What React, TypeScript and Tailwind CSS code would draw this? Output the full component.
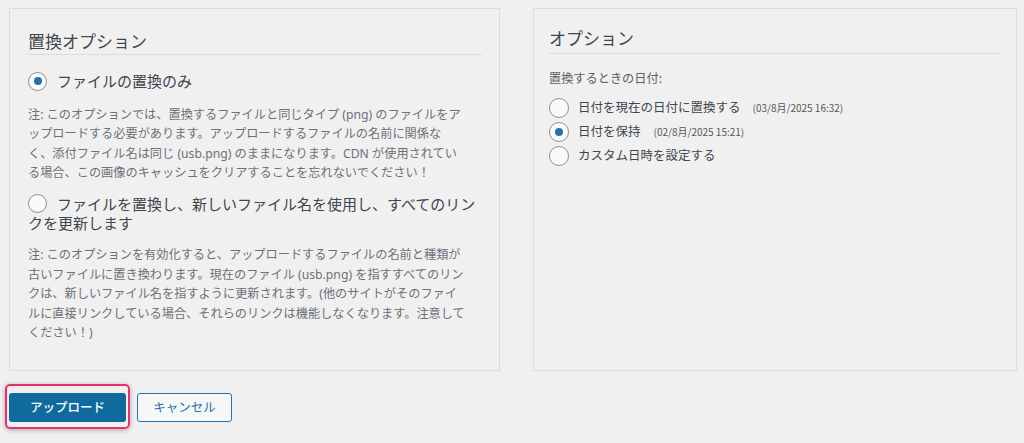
import React, { useState } from 'react';

const font = { fontFamily: '"Noto Sans CJK JP", "Noto Sans", sans-serif' };
const noteFont = { fontFamily: '"Noto Sans", "Noto Sans CJK JP", sans-serif' };

type RadioProps = { checked: boolean; onClick: () => void; size?: string };

const Radio: React.FC<RadioProps> = ({ checked, onClick, size = 'w-[19px] h-[19px]' }) => (
  <button
    type="button"
    onClick={onClick}
    className={`${size} shrink-0 rounded-full border border-[#8c8f94] bg-[#fafafa] flex items-center justify-center`}
  >
    {checked && <span className="w-[8px] h-[8px] rounded-full bg-[#2271b1]" />}
  </button>
);

const App: React.FC = () => {
  const [mode, setMode] = useState<'replace' | 'rename'>('replace');
  const [dateMode, setDateMode] = useState<'now' | 'keep' | 'custom'>('keep');

  return (
    <div className="min-h-screen bg-[#f0f0f1] text-[#3c434a] pl-[9px] pr-[7px] pt-[8px]" style={font}>
      <div className="flex gap-[33px]">
        {/* 置換オプション */}
        <div className="w-[491px] h-[363px] border border-[#dcdcde] bg-[#f0f0f1] pl-[18px] pr-[17px] pt-[20px]">
          <h2 className="text-[17px] leading-[24px] pb-[1px] border-b border-[#dcdcde] text-[#40464d]">
            置換オプション
          </h2>

          <div className="mt-[16px] flex items-center gap-[10px] text-[15px] leading-[20px] text-[#40464d]">
            <Radio checked={mode === 'replace'} onClick={() => setMode('replace')} />
            <span>ファイルの置換のみ</span>
          </div>
          <p className="mt-[14px] text-[12.2px] leading-[19.3px] text-[#6c7177]" style={noteFont}>
            <span className="block whitespace-nowrap">注: このオプションでは、置換するファイルと同じタイプ (png) のファイルをア</span>
            <span className="block whitespace-nowrap">ップロードする必要があります。アップロードするファイルの名前に関係な</span>
            <span className="block whitespace-nowrap">く、添付ファイル名は同じ (usb.png) のままになります。CDN が使用されてい</span>
            <span className="block whitespace-nowrap">る場合、この画像のキャッシュをクリアすることを忘れないでください！</span>
          </p>

          <div className="mt-[12px] text-[15px] leading-[19px] text-[#40464d]">
            <div className="flex items-center gap-[10px]">
              <Radio checked={mode === 'rename'} onClick={() => setMode('rename')} />
              <span className="whitespace-nowrap">ファイルを置換し、新しいファイル名を使用し、すべてのリン</span>
            </div>
            <div>クを更新します</div>
          </div>
          <p className="mt-[13px] text-[12.2px] leading-[19.5px] text-[#6c7177]" style={noteFont}>
            <span className="block whitespace-nowrap">注: このオプションを有効化すると、アップロードするファイルの名前と種類が</span>
            <span className="block whitespace-nowrap">古いファイルに置き換わります。現在のファイル (usb.png) を指すすべてのリン</span>
            <span className="block whitespace-nowrap">クは、新しいファイル名を指すように更新されます。(他のサイトがそのファイ</span>
            <span className="block whitespace-nowrap">ルに直接リンクしている場合、それらのリンクは機能しなくなります。注意して</span>
            <span className="block whitespace-nowrap">ください！)</span>
          </p>
        </div>

        {/* オプション */}
        <div className="flex-1 h-[363px] border border-[#dcdcde] bg-[#f0f0f1] pl-[15px] pr-[14px] pt-[17px]">
          <h2 className="text-[17px] leading-[24px] pb-[3px] border-b border-[#dcdcde] text-[#40464d]">
            オプション
          </h2>
          <p className="mt-[15px] text-[12.2px] leading-[19.5px] text-[#5a6066]">置換するときの日付:</p>
          <div className="mt-[7px] flex flex-col text-[12.5px] text-[#40464d]">
            <div className="h-[24px] flex items-center gap-[9px]">
              <Radio size="w-[20px] h-[20px]" checked={dateMode === 'now'} onClick={() => setDateMode('now')} />
              <span>日付を現在の日付に置換する</span>
              <span className="ml-[3px] text-[10px] text-[#50575e]">(03/8月/2025 16:32)</span>
            </div>
            <div className="h-[24px] flex items-center gap-[9px]">
              <Radio size="w-[20px] h-[20px]" checked={dateMode === 'keep'} onClick={() => setDateMode('keep')} />
              <span>日付を保持</span>
              <span className="ml-[4px] text-[10px] text-[#50575e]">(02/8月/2025 15:21)</span>
            </div>
            <div className="h-[24px] flex items-center gap-[9px]">
              <Radio size="w-[20px] h-[20px]" checked={dateMode === 'custom'} onClick={() => setDateMode('custom')} />
              <span>カスタム日時を設定する</span>
            </div>
          </div>
        </div>
      </div>

      {/* ボタン */}
      <div className="mt-[22px] flex items-center gap-[11px]">
        <div className="relative">
          <button
            type="button"
            className="w-[117px] h-[29px] rounded-[3px] bg-[#0f6a9e] text-white text-[12.5px] font-medium"
          >
            アップロード
          </button>
          <span className="pointer-events-none absolute -left-[4px] -right-[4px] -top-[9px] -bottom-[7px] rounded-[5px] border-[2.5px] border-[#ea2e6c] shadow-[0_1px_5px_rgba(0,0,0,0.3)]" />
        </div>
        <button
          type="button"
          className="w-[95px] h-[29px] rounded-[3px] border border-[#2271b1] bg-[#f6f7f7] text-[#2271b1] text-[12.5px]"
        >
          キャンセル
        </button>
      </div>
    </div>
  );
};

export default App;
